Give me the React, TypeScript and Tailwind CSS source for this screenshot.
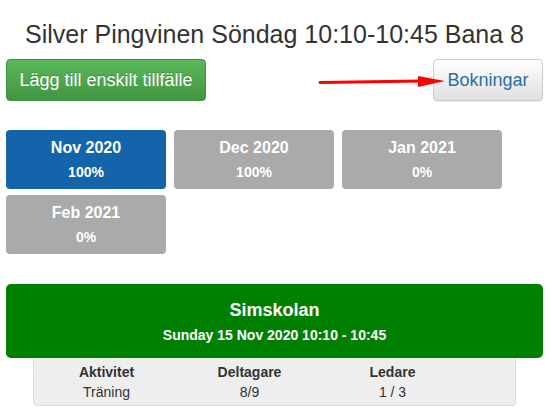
const months = [
  { label: "Nov 2020", pct: "100%", active: true },
  { label: "Dec 2020", pct: "100%", active: false },
  { label: "Jan 2021", pct: "0%", active: false },
  { label: "Feb 2021", pct: "0%", active: false },
];

const cols = [
  { head: "Aktivitet", value: "Träning" },
  { head: "Deltagare", value: "8/9" },
  { head: "Ledare", value: "1 / 3" },
];

const App = () => {
  return (
    <div className="w-[549px] h-[411px] overflow-hidden bg-white px-[6px] font-['Liberation_Sans',Arial,sans-serif] text-[#333]">
      <h3 className="pt-[21px] text-center text-[25px] leading-[26px]">
        Silver Pingvinen Söndag 10:10-10:45 Bana 8
      </h3>

      <div className="relative mt-[12px] flex items-start justify-between">
        <button className="h-[42px] w-[200px] rounded-[4px] border border-[#3e8f3e] bg-gradient-to-b from-[#5cb85c] to-[#419641] text-[18px] text-white [text-shadow:0_-1px_0_rgba(0,0,0,0.2)]">
          Lägg till enskilt tillfälle
        </button>
        <button className="h-[42px] w-[110px] rounded-[4px] border border-[#ccc] bg-gradient-to-b from-white to-[#e0e0e0] text-[18px] text-[#2b6ea8] shadow-[0_1px_1px_rgba(0,0,0,0.08)]">
          Bokningar
        </button>
        <svg
          className="absolute left-[312px] top-[16px]"
          width="130"
          height="16"
          viewBox="0 0 130 16"
        >
          <line x1="2" y1="7.5" x2="104" y2="6" stroke="#f00" strokeWidth="3" strokeLinecap="round" />
          <polygon points="100,1 127,6 100,12" fill="#f00" />
        </svg>
      </div>

      <div className="mt-[29px] grid grid-cols-[160px_160px_160px] gap-x-[8px] gap-y-[6px]">
        {months.map((m) => (
          <div
            key={m.label}
            className={`h-[59px] rounded-[4px] pt-[7px] text-center font-bold text-white ${
              m.active ? "bg-[#1464ac]" : "bg-[#aaaaaa]"
            }`}
          >
            <div className="text-[16px] leading-[22px]">{m.label}</div>
            <div className="mt-[3px] text-[14px] leading-[20px]">{m.pct}</div>
          </div>
        ))}
      </div>

      <div className="mt-[30px] h-[74px] rounded-[5px] bg-[#008000] pt-[16px] text-center font-bold text-white">
        <div className="text-[18px] leading-[20px]">Simskolan</div>
        <div className="mt-[5px] text-[14px] leading-[20px]">Sunday 15 Nov 2020 10:10 - 10:45</div>
      </div>

      <div className="mx-[27px] flex h-[48px] rounded-b-[4px] border border-t-0 border-[#ddd] bg-[#eeeeee] pl-[1px] pt-[4px] text-[14px] leading-[20px]">
        {cols.map((c) => (
          <div key={c.head} className="w-[143px] text-center">
            <div className="font-bold">{c.head}</div>
            <div>{c.value}</div>
          </div>
        ))}
      </div>
    </div>
  );
};

export default App;
